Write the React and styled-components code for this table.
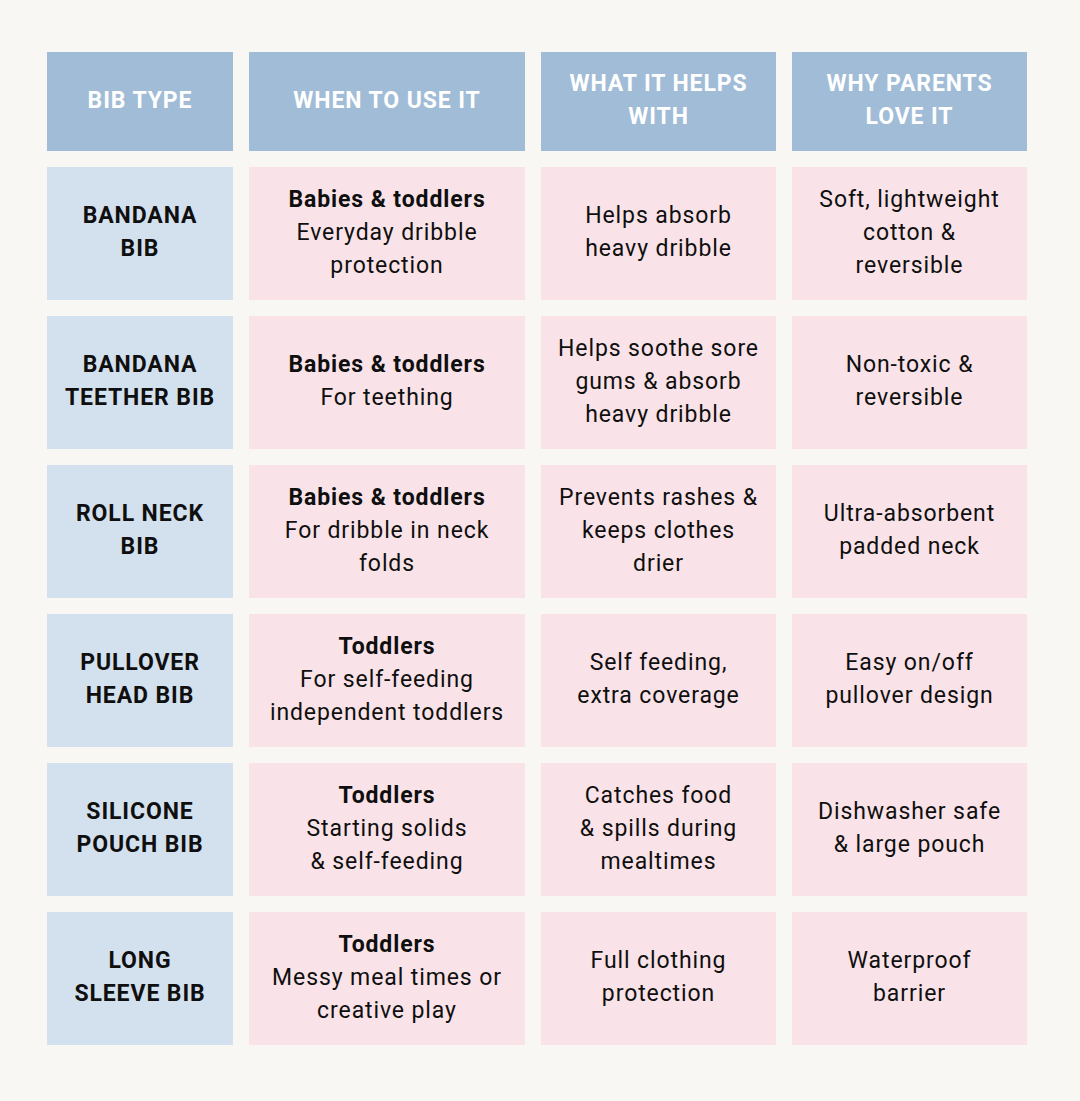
import React from 'react';
import styled, { createGlobalStyle } from 'styled-components';

const GlobalStyle = createGlobalStyle`
  html, body {
    margin: 0;
    padding: 0;
    background: #f8f7f4;
  }
  body {
    font-family: Roboto, "Noto Sans", sans-serif;
    color: #0f0f0f;
  }
`;

const heads = ['BIB TYPE', 'WHEN TO USE IT', 'WHAT IT HELPS WITH', 'WHY PARENTS LOVE IT'];

const rows = [
  {
    type: ['BANDANA', 'BIB'],
    who: 'Babies & toddlers',
    when: ['Everyday dribble', 'protection'],
    helps: ['Helps absorb', 'heavy dribble'],
    love: ['Soft, lightweight', 'cotton &', 'reversible'],
  },
  {
    type: ['BANDANA', 'TEETHER BIB'],
    who: 'Babies & toddlers',
    when: ['For teething'],
    helps: ['Helps soothe sore', 'gums & absorb', 'heavy dribble'],
    love: ['Non-toxic &', 'reversible'],
  },
  {
    type: ['ROLL NECK', 'BIB'],
    who: 'Babies & toddlers',
    when: ['For dribble in neck', 'folds'],
    helps: ['Prevents rashes &', 'keeps clothes', 'drier'],
    love: ['Ultra-absorbent', 'padded neck'],
  },
  {
    type: ['PULLOVER', 'HEAD BIB'],
    who: 'Toddlers',
    when: ['For self-feeding', 'independent toddlers'],
    helps: ['Self feeding,', 'extra coverage'],
    love: ['Easy on/off', 'pullover design'],
  },
  {
    type: ['SILICONE', 'POUCH BIB'],
    who: 'Toddlers',
    when: ['Starting solids', '& self-feeding'],
    helps: ['Catches food', '& spills during', 'mealtimes'],
    love: ['Dishwasher safe', '& large pouch'],
  },
  {
    type: ['LONG', 'SLEEVE BIB'],
    who: 'Toddlers',
    when: ['Messy meal times or', 'creative play'],
    helps: ['Full clothing', 'protection'],
    love: ['Waterproof', 'barrier'],
  },
];

const Lines = ({ items }) =>
  items.map((t, i) => <Line key={i}>{t}</Line>);

const App = () => (
  <>
    <GlobalStyle />
    <Page>
      <Table>
        {heads.map((h) => (
          <HeadCell key={h}>{h}</HeadCell>
        ))}
        {rows.map((r, i) => (
          <React.Fragment key={i}>
            <TypeCell>
              <Lines items={r.type} />
            </TypeCell>
            <Cell>
              <Strong>{r.who}</Strong>
              <Lines items={r.when} />
            </Cell>
            <Cell>
              <Lines items={r.helps} />
            </Cell>
            <Cell>
              <Lines items={r.love} />
            </Cell>
          </React.Fragment>
        ))}
      </Table>
    </Page>
  </>
);

const Page = styled.div`
  width: 1080px;
  height: 1101px;
  padding: 52px 0 0 47px;
  box-sizing: border-box;
`;

const Table = styled.div`
  display: grid;
  grid-template-columns: 186px 276px 235px 235px;
  grid-template-rows: 99px repeat(6, 133px);
  gap: 16px;
`;

const BaseCell = styled.div`
  display: flex;
  flex-direction: column;
  align-items: center;
  justify-content: center;
  text-align: center;
  font-size: 23px;
  line-height: 33px;
  letter-spacing: 0.9px;
  padding-bottom: 3px;
`;

const HeadCell = styled(BaseCell)`
  background: #a1bcd7;
  color: #ffffff;
  font-weight: 700;
  padding: 0 20px 3px;
`;

const TypeCell = styled(BaseCell)`
  background: #d3e0ee;
  font-weight: 700;
`;

const Cell = styled(BaseCell)`
  background: #f9e3e8;
  font-weight: 400;
`;

const Strong = styled.div`
  font-weight: 700;
`;

const Line = styled.div`
  white-space: nowrap;
`;

export default App;
